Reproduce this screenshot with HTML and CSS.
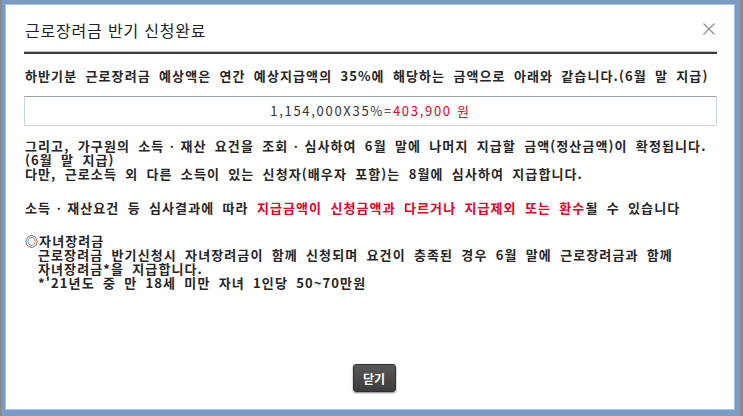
FILE: index.html
```html
<!DOCTYPE html>
<html lang="ko">
<head>
<meta charset="utf-8">
<title>근로장려금 반기 신청완료</title>
<link rel="stylesheet" href="styles.css">
</head>
<body>
<div class="frame">
  <div class="dialog">
    <div class="header">
      <h1 class="title">근로장려금 반기 신청완료</h1>
      <span class="close" aria-label="닫기">
        <svg width="12" height="12" viewBox="0 0 12 12"><path d="M0.5 0.5 L11.5 11.5 M11.5 0.5 L0.5 11.5" stroke="#8c8c8c" stroke-width="1.1" fill="none"/></svg>
      </span>
    </div>
    <div class="rule"></div>
    <p class="lead">하반기분 근로장려금 예상액은 연간 예상지급액의 35%에 해당하는 금액으로 아래와 같습니다.(6월 말 지급)</p>
    <div class="calc">1,154,000X35%=<span class="red">403,900 원</span></div>
    <div class="para">
      <div class="line">그리고, 가구원의 소득<span class="dot">ㆍ</span>재산 요건을 조회<span class="dot">ㆍ</span>심사하여 6월 말에 나머지 지급할 금액(정산금액)이 확정됩니다.</div>
      <div class="line">(6월 말 지급)</div>
      <div class="line">다만, 근로소득 외 다른 소득이 있는 신청자(배우자 포함)는 8월에 심사하여 지급합니다.</div>
    </div>
    <div class="para p3">
      <div class="line">소득<span class="dot">ㆍ</span>재산요건 등 심사결과에 따라 <span class="red">지급금액이 신청금액과 다르거나 지급제외 또는 환수</span>될 수 있습니다</div>
    </div>
    <div class="para p4">
      <div class="line">◎자녀장려금</div>
      <div class="line indent">근로장려금 반기신청시 자녀장려금이 함께 신청되며 요건이 충족된 경우 6월 말에 근로장려금과 함께</div>
      <div class="line indent">자녀장려금*을 지급합니다.</div>
      <div class="line indent">*'21년도 중 만 18세 미만 자녀 1인당 50~70만원</div>
    </div>
    <div class="actions">
      <button class="btn" type="button">닫기</button>
    </div>
  </div>
</div>
</body>
</html>
```

FILE: styles.css
```css
html, body {
  margin: 0;
  padding: 0;
}
body {
  width: 743px;
  height: 416px;
  overflow: hidden;
  background: #8a8a8a;
  font-family: "Noto Sans CJK KR", "Noto Sans", sans-serif;
  color: #1a1a1a;
}
.frame {
  margin-left: 2px;
  width: 730px;
  height: 406px;
  padding: 4px 5px 6px 3px;
  background: #7a9bc4;
}
.dialog {
  width: 730px;
  height: 406px;
  background: #fff;
  padding: 0 16px 0 19px;
  box-sizing: border-box;
  box-shadow: inset 0 0 0 1px #a9c2df;
  display: flex;
  flex-direction: column;
}
.header {
  display: flex;
  align-items: center;
  justify-content: space-between;
  height: 20px;
  margin-top: 16px;
  padding-left: 1px;
}
.title {
  margin: 0;
  font-size: 16px;
  font-weight: normal;
  letter-spacing: 0.8px;
  line-height: 20px;
  color: #222;
}
.close {
  display: flex;
  margin-right: 4px;
  margin-top: -2px;
}
.rule {
  margin-top: 11px;
  width: 693px;
  border-top: 1px solid #c9c9c9;
  border-bottom: 2px solid #3a3a3a;
}
.lead, .line {
  font-size: 13px;
  font-weight: bold;
  letter-spacing: 1.1px;
  word-spacing: 3.5px;
  white-space: nowrap;
  padding-left: 1px;
  color: #262626;
}
.dot {
  padding: 0 1.5px;
}
.lead {
  margin: 14px 0 0;
  line-height: 16px;
}
.calc {
  margin-top: 12px;
  width: 693px;
  height: 30px;
  box-sizing: border-box;
  border: 1px solid #ccd6e0;
  border-top-color: #9aa2aa;
  font-size: 13px;
  letter-spacing: 1.7px;
  line-height: 28px;
  text-align: center;
  color: #333;
}
.red {
  color: #e60023;
}
.para {
  margin-top: 13px;
}
.para .line {
  line-height: 14px;
}
.p3 {
  margin-top: 20px;
}
.p4 {
  margin-top: 19px;
}
.indent {
  padding-left: 14px;
}
.actions {
  display: flex;
  justify-content: center;
  margin-top: 74px;
  padding-left: 1px;
}
.btn {
  width: 43px;
  height: 28px;
  border: 1px solid #2e2e2e;
  border-radius: 3px;
  background: linear-gradient(#585858, #3c3c3c);
  box-shadow: 0 1px 2px rgba(0,0,0,0.5);
  color: #fff;
  font-family: "Noto Sans CJK KR", sans-serif;
  font-size: 12px;
  font-weight: bold;
  padding: 0;
  margin-left: 4px;
}
```
